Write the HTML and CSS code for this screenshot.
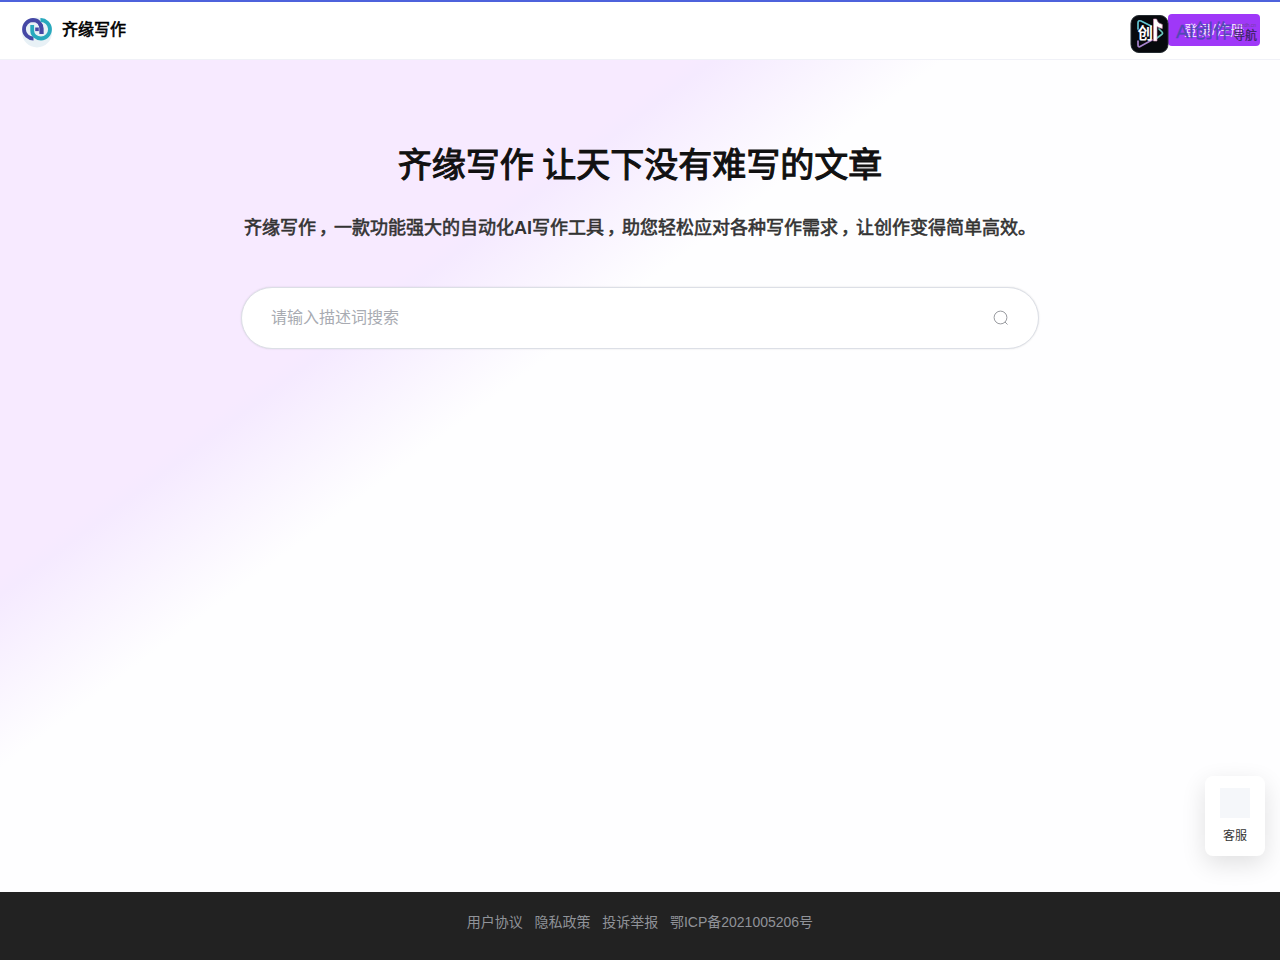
FILE: index.html
```html
<!DOCTYPE html>
<html lang="zh-CN">
<head>
<meta charset="utf-8">
<title>齐缘写作</title>
<link rel="stylesheet" href="styles.css">
</head>
<body>
<header class="header">
  <a class="brand">
    <svg class="brand-logo" width="34" height="34" viewBox="0 0 34 34" fill="none">
      <circle cx="17" cy="17.500" r="15" fill="#e8f1f6"/>
      <path d="M13.500 23.500A9.200 9.200 0 1 1 13 5C18 5 21.500 9 21.500 13.500V19" stroke="#4548a5" stroke-width="3.800"/>
      <path d="M20.500 5A9.200 9.200 0 1 1 21 23.500C16 23.500 12.200 20 12.200 15.500V10" stroke="#28a9bd" stroke-width="3.800"/>
      <path d="M19.500 8.500q2 2 2 5V19" stroke="#4548a5" stroke-width="3.800"/>
      <rect x="15.200" y="12.500" width="3.600" height="3.600" fill="#4548a5"/>
    </svg>
    <span>齐缘写作</span>
  </a>
  <button class="login">登录/注册</button>
  <div class="watermark">
    <svg width="130" height="40" viewBox="0 0 130 40">
      <rect x="1" y="1.5" width="37" height="37" rx="8" fill="#07090d" stroke="#252c31"/>
      <g fill="none" stroke-width="1.7" stroke-linejoin="round" stroke-linecap="round">
        <path d="M8 15V9q0-3 3-2l10 5" stroke="#62c5d2"/>
        <path d="M8 27v4q0 3 3 1l11-6" stroke="#a783ce"/>
        <path d="M29 15l3 3q1.500 1.500-1 3l-4 3" stroke="#6ac8bd"/>
      </g>
      <text class="badge-char" x="7.500" y="25">创</text>
      <path d="M23.500 27V5h3q1 4.500 5.800 5.500v4q-3-.4-5.300-2V27z" fill="#fff" stroke="#d98ebb" stroke-width=".6"/>
      <text x="46" y="24" class="mark-ai">AI创作</text>
      <text x="103" y="26" class="mark-nav">导航</text>
      <text x="105" y="13" class="mark-domain">aiczdh.cn</text>
    </svg>
  </div>
</header>
<main class="hero">
  <h1>齐缘写作 让天下没有难写的文章</h1>
  <h2>齐缘写作<span class="comma">，</span>一款功能强大的自动化<b>AI</b>写作工具<span class="comma">，</span>助您轻松应对各种写作需求<span class="comma">，</span>让创作变得简单高效。</h2>
  <label class="search">
    <input type="text" placeholder="请输入描述词搜索">
    <svg width="16" height="16" viewBox="0 0 16 16" fill="none" stroke="#999ba0" stroke-width="1">
      <circle cx="7.5" cy="7.5" r="6.4"/><path d="M12 12l2.500 2.500"/>
    </svg>
  </label>
</main>
<aside class="service"><div class="service-icon"></div><span>客服</span></aside>
<footer class="footer">
  <a>用户协议</a><a>隐私政策</a><a>投诉举报</a><a>鄂ICP备2021005206号</a>
</footer>
</body>
</html>
```
FILE: styles.css
```css
* { box-sizing: border-box; }
body {
  margin: 0;
  height: 960px;
  display: flex;
  flex-direction: column;
  overflow: hidden;
  font-family: "Liberation Sans", "Noto Sans CJK SC", sans-serif;
  background: linear-gradient(to bottom right, #f7eaff 30%, #f5eaff 31%, #fefeff 40%);
}
.header {
  position: relative;
  flex: none;
  height: 60px;
  padding: 0 20px 2px;
  display: flex;
  align-items: center;
  justify-content: space-between;
  background: #fff;
  border-top: 2px solid #4e62dc;
  border-bottom: 1px solid #f0f1f7;
}
.brand {
  display: flex;
  align-items: center;
  gap: 8px;
  font-size: 16px;
  color: #000;
  -webkit-text-stroke: .6px currentColor;
}
.brand-logo { margin-top: 4px; }
.brand span { margin-top: -3px; }
.login {
  width: 92px;
  height: 32px;
  padding: 0 0 2px;
  border: 0;
  border-radius: 4px;
  background: #9f38f8;
  color: #f3e2ff;
  font: 14px "Liberation Sans", "Noto Sans CJK SC", sans-serif;
}
.watermark { position: absolute; right: 20px; top: 12px; height: 40px; }
.watermark svg { display: block; }
.badge-char { font-size: 15.5px; font-weight: 700; fill: #fff; }
.mark-ai { font-size: 19px; fill: #5148b5; stroke: #5148b5; stroke-width: .3px; }
.mark-nav { font-size: 12px; fill: #37235d; stroke: #37235d; stroke-width: .2px; }
.mark-domain { font-size: 5px; fill: #70409c; }
.hero {
  flex: 1;
  display: flex;
  flex-direction: column;
  align-items: center;
  padding-top: 80px;
}
h1 {
  margin: 0;
  font-size: 34px;
  font-weight: 400;
  line-height: 50px;
  color: #111;
  white-space: nowrap;
  word-spacing: -1px;
  -webkit-text-stroke: 1.1px currentColor;
}
h2 {
  margin: 24px 0 0;
  font-size: 18px;
  font-weight: 400;
  line-height: 28px;
  color: #333;
  white-space: nowrap;
  -webkit-text-stroke: .6px currentColor;
}
h2 b { -webkit-text-stroke: 0; }
.comma { position: relative; left: 3px; }
.search {
  display: flex;
  align-items: center;
  width: 798px;
  height: 62px;
  margin-top: 45px;
  padding: 0 29px;
  border: 1px solid #dcdfe6;
  border-radius: 31px;
  background: #fff;
  box-shadow: 0 0 2px rgba(0, 0, 0, .12);
}
.search input {
  flex: 1;
  padding: 0;
  border: 0;
  outline: 0;
  background: none;
  font: 16px "Liberation Sans", "Noto Sans CJK SC", sans-serif;
}
.search input::placeholder { color: #a8abb2; }
.service {
  position: absolute;
  right: 15px;
  top: 776px;
  width: 60px;
  height: 80px;
  padding-top: 12px;
  display: flex;
  flex-direction: column;
  align-items: center;
  gap: 9px;
  border-radius: 8px;
  background: #fff;
  box-shadow: 0 8px 24px rgba(0, 0, 0, .12);
  font-size: 12px;
  line-height: 18px;
  color: #333;
}
.service-icon { width: 30px; height: 30px; background: #f5f7fa; }
.footer {
  flex: none;
  height: 68px;
  padding-top: 20px;
  display: flex;
  justify-content: center;
  gap: 11.7px;
  background: #222;
  color: #909399;
  font-size: 14px;
  line-height: 21px;
}
```
